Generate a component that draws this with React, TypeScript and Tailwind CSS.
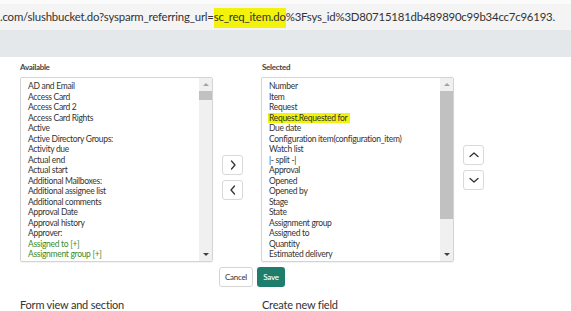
import React from "react";

const available = [
  "AD and Email",
  "Access Card",
  "Access Card 2",
  "Access Card Rights",
  "Active",
  "Active Directory Groups:",
  "Activity due",
  "Actual end",
  "Actual start",
  "Additional Mailboxes:",
  "Additional assignee list",
  "Additional comments",
  "Approval Date",
  "Approval history",
  "Approver:",
];

const selected = [
  "Number",
  "Item",
  "Request",
  "Request.Requested for",
  "Due date",
  "Configuration item(configuration_item)",
  "Watch list",
  "|- split -|",
  "Approval",
  "Opened",
  "Opened by",
  "Stage",
  "State",
  "Assignment group",
  "Assigned to",
  "Quantity",
  "Estimated delivery",
  "Order guide",
];

function Scrollbar({ thumbH }: { thumbH: number }) {
  return (
    <div className="w-[13px] bg-[#f0f0f0] flex flex-col items-center shrink-0">
      <div className="h-[13px] w-full flex items-center justify-center">
        <div className="w-0 h-0 border-l-[3px] border-r-[3px] border-b-[3px] border-l-transparent border-r-transparent border-b-[#a3a3a3]" />
      </div>
      <div className="w-full bg-[#c1c1c1]" style={{ height: thumbH }} />
      <div className="flex-1" />
      <div className="h-[13px] w-full flex items-center justify-center">
        <div className="w-0 h-0 border-l-[3px] border-r-[3px] border-t-[3px] border-l-transparent border-r-transparent border-t-[#404040]" />
      </div>
    </div>
  );
}

function SmallButton({ children }: { children: React.ReactNode }) {
  return (
    <div className="w-[21px] h-[20px] bg-white border border-[#d9d9d9] rounded-[3px] flex items-center justify-center">
      {children}
    </div>
  );
}

function Chevron({ dir }: { dir: "left" | "right" | "up" | "down" }) {
  const d = {
    right: "M4.5 2 L8 6 L4.5 10",
    left: "M7.5 2 L4 6 L7.5 10",
    up: "M2 7.5 L6 4 L10 7.5",
    down: "M2 4.5 L6 8 L10 4.5",
  }[dir];
  return (
    <svg width="12" height="12" viewBox="0 0 12 12" fill="none">
      <path d={d} stroke="#333" strokeWidth="1.3" strokeLinecap="round" strokeLinejoin="round" />
    </svg>
  );
}

export default function App() {
  return (
    <div className="w-[571px] h-[311px] overflow-hidden bg-white text-[#333] font-['Lato',sans-serif]">
      <div className="h-[4px] bg-[#fbfbfb]" />
      <div className="h-[26px] bg-[#f4f4f4] flex items-center overflow-hidden whitespace-nowrap text-[11.4px] text-[#333] tracking-[-0.2px] pb-[1px]">
        <span>.com/slushbucket.do?sysparm_referring_url=</span>
        <span className="bg-[#f2f20a] pb-[3px] -mb-[3px]">sc_req_item.do</span>
        <span>%3Fsys_id%3D80715181db489890c99b34cc7c96193.</span>
      </div>
      <div className="h-[27px] bg-[#e5e8ea]" />

      <div className="pl-[20px] pt-[5px] flex">
        <div className="w-[193px]">
          <div className="text-[8px] leading-[10px] font-bold tracking-[-0.3px] text-[#444]">Available</div>
          <div className="mt-[5px] h-[185px] border border-[#d4d4d4] rounded-[2px] flex overflow-hidden shadow-[0_1px_1px_rgba(0,0,0,0.05)]">
            <div className="flex-1 pl-[7px] pt-[3px] overflow-hidden text-[8.5px] leading-[10.5px] tracking-[-0.3px] text-[#333]">
              {available.map((t) => (
                <div key={t} className="whitespace-nowrap">{t}</div>
              ))}
              <div className="text-[#3a8a2e]">Assigned to [+]</div>
              <div className="text-[#3a8a2e]">Assignment group [+]</div>
              <div>Attachments</div>
            </div>
            <Scrollbar thumbH={9} />
          </div>
        </div>

        <div className="ml-[9px] pt-[93px] flex flex-col gap-[5px]">
          <SmallButton><Chevron dir="right" /></SmallButton>
          <SmallButton><Chevron dir="left" /></SmallButton>
        </div>

        <div className="ml-[18px] w-[193px]">
          <div className="text-[8px] leading-[10px] font-bold tracking-[-0.3px] text-[#444] pl-[1px]">Selected</div>
          <div className="mt-[5px] h-[185px] border border-[#d4d4d4] rounded-[2px] flex overflow-hidden shadow-[0_1px_1px_rgba(0,0,0,0.05)]">
            <div className="flex-1 pl-[7px] pt-[3px] overflow-hidden text-[8.5px] leading-[10.5px] tracking-[-0.3px] text-[#333]">
              {selected.map((t) => (
                <div key={t} className="whitespace-nowrap">
                  {t === "Request.Requested for" ? (
                    <span className="bg-[#f2f20a] pr-[3px] -ml-[1px] pl-[1px]">{t}</span>
                  ) : (
                    t
                  )}
                </div>
              ))}
            </div>
            <Scrollbar thumbH={128} />
          </div>
        </div>

        <div className="ml-[9px] pt-[83px] flex flex-col gap-[5px]">
          <SmallButton><Chevron dir="up" /></SmallButton>
          <SmallButton><Chevron dir="down" /></SmallButton>
        </div>
      </div>

      <div className="flex pl-[219px] mt-[5px] gap-[4px] text-[8px] tracking-[-0.3px]">
        <div className="w-[34px] h-[20px] border border-[#d4d4d4] rounded-[3px] bg-white flex items-center justify-center text-[#333]">Cancel</div>
        <div className="w-[28px] h-[20px] rounded-[3px] bg-[#1e7d6b] flex items-center justify-center text-white font-semibold">Save</div>
      </div>

      <div className="flex mt-[10px] text-[11px] leading-[16px] tracking-[-0.2px] text-[#333]">
        <div className="pl-[20px] w-[261px]">Form view and section</div>
        <div className="pl-[1px]">Create new field</div>
      </div>
    </div>
  );
}
